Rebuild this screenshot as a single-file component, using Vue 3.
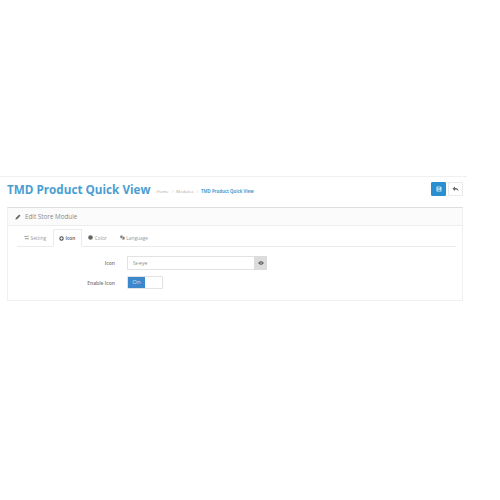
<template>
    <div class="page">
        <div class="content">
            <div class="page-header">
                <h1 class="title">TMD Product Quick View</h1>
                <ul class="crumbs">
                    <li>Home</li>
                    <li class="sep">/</li>
                    <li>Modules</li>
                    <li class="sep">/</li>
                    <li class="current">TMD Product Quick View</li>
                </ul>
                <div class="actions">
                    <button class="btn btn-save">
                        <svg width="6" height="6" viewBox="0 0 12 12">
                            <path fill="#cfe6f5" d="M1 1h8l2 2v8H1z"/>
                            <path fill="#5aa9dc" d="M3 2h5v3H3zM3 7h6v3H3z"/>
                        </svg>
                    </button>
                    <button class="btn btn-back">
                        <svg width="7" height="6" viewBox="0 0 14 12">
                            <path fill="#666" d="M6 1v3c4 0 7 1 7 7-1-3-3-4-7-4v3L1 5.500z"/>
                        </svg>
                    </button>
                </div>
            </div>
            <div class="panel">
                <div class="panel-heading">
                    <svg width="6" height="6" viewBox="0 0 12 12">
                        <path fill="#666" d="M8.500 1l2.500 2.500-7 7L1 11l.5-3z"/>
                    </svg>
                    <span>Edit Store Module</span>
                </div>
                <div class="panel-body">
                    <div class="tabs">
                        <div v-for="tab in tabs" :key="tab.name" class="tab" :class="{ active: tab.name == 'Icon' }">
                            <svg width="5" height="5" viewBox="0 0 12 12">
                                <path v-if="tab.icon == 'cog'" fill="#888" d="M1 3h6v2H1zM8 2h3v2H8zM3 7h3v3H3zM7 8h4v2H7z"/>
                                <circle v-else-if="tab.icon == 'ring'" cx="6" cy="6" r="4" fill="none" stroke="#444" stroke-width="2.500"/>
                                <circle v-else-if="tab.icon == 'dot'" cx="6" cy="6" r="5.500" fill="#666"/>
                                <path v-else fill="#777" d="M1 1h5v7H1zM7 4h4v7H5V9h2z"/>
                            </svg>
                            <span>{{ tab.name }}</span>
                        </div>
                    </div>
                    <div class="form-row">
                        <label>Icon</label>
                        <div class="input-group">
                            <div class="input">fa-eye</div>
                            <div class="addon">
                                <svg width="6" height="4" viewBox="0 0 14 10">
                                    <path fill="#666" d="M0 5c3-6 11-6 14 0-3 6-11 6-14 0z"/>
                                    <circle cx="7" cy="5" r="2" fill="#ccc"/>
                                </svg>
                            </div>
                        </div>
                    </div>
                    <div class="form-row">
                        <label>Enable Icon</label>
                        <div class="switch">
                            <div class="switch-on">On</div>
                            <div class="switch-off"></div>
                        </div>
                    </div>
                </div>
            </div>
        </div>
    </div>
</template>
<script setup>
const tabs = [
    { name: "Setting", icon: "cog" },
    { name: "Icon", icon: "ring" },
    { name: "Color", icon: "dot" },
    { name: "Language", icon: "lang" },
];
</script>
<style>
html, body {
    background: #fff;
}
</style>
<style scoped>
.page {
    width: 500px;
    height: 500px;
    padding-top: 176px;
    box-sizing: border-box;
    font-family: "Open Sans", sans-serif;
    color: #666;
    overflow: hidden;
}
.content {
    width: 467px;
    border-top: 1px solid #f0f0f0;
    padding: 0 4px 0 7px;
    box-sizing: border-box;
}
.page-header {
    display: flex;
    align-items: center;
    height: 24px;
    margin-bottom: 6px;
}
.title {
    margin: 0;
    font-size: 11.700px;
    font-weight: 700;
    color: #4a9ed2;
    white-space: nowrap;
    line-height: 24px;
}
.crumbs {
    display: flex;
    align-items: center;
    gap: 2px;
    list-style: none;
    margin: 3px 0 0 6px;
    padding: 0;
    font-size: 4.300px;
    color: #aaa;
}
.sep {
    margin: 0 1px;
    color: #ccc;
}
.current {
    color: #4a9ed2;
    font-weight: 700;
}
.actions {
    display: flex;
    gap: 2px;
    margin-left: auto;
}
.btn {
    display: flex;
    align-items: center;
    justify-content: center;
    width: 15px;
    height: 14px;
    padding: 0;
    border-radius: 1px;
    box-sizing: border-box;
}
.btn-save {
    background: #2a8fcf;
    border: 1px solid #2a8fcf;
}
.btn-back {
    background: #fff;
    border: 1px solid #eaeaea;
}
.panel {
    border: 1px solid #f0f0f0;
    border-top: 1px solid #ddd;
    height: 94px;
    box-sizing: border-box;
}
.panel-heading {
    display: flex;
    align-items: center;
    gap: 4px;
    height: 18px;
    padding-left: 7px;
    background: #fbfbfb;
    border-bottom: 1px solid #eee;
    font-size: 6.300px;
    color: #888;
    box-sizing: border-box;
}
.panel-body {
    padding: 3px 6px 0 9px;
}
.tabs {
    display: flex;
    height: 18px;
    padding-left: 0.500px;
    border-bottom: 1px solid #ebebeb;
    box-sizing: border-box;
}
.tab {
    display: flex;
    align-items: center;
    gap: 1.500px;
    padding: 0 6.500px;
    font-size: 4.800px;
    color: #999;
}
.tab.active {
    border: 1px solid #ebebeb;
    border-bottom: 1px solid #fff;
    border-radius: 1px 1px 0 0;
    height: 18px;
    padding: 0 5.500px;
    color: #555;
    font-weight: 600;
    box-sizing: border-box;
}
.form-row {
    display: flex;
    align-items: center;
    margin-top: 9px;
}
.form-row + .form-row {
    margin-top: 6px;
}
label {
    width: 98px;
    text-align: right;
    font-size: 5px;
    font-weight: 600;
    color: #777;
}
.input-group {
    display: flex;
    margin-left: 12px;
    height: 14px;
}
.input {
    width: 127px;
    border: 1px solid #e2e2e2;
    border-right: 0;
    border-radius: 1px 0 0 1px;
    padding-left: 5px;
    font-size: 5px;
    line-height: 12px;
    color: #888;
    box-sizing: border-box;
}
.addon {
    display: flex;
    align-items: center;
    justify-content: center;
    width: 13px;
    background: #dcdcdc;
}
.switch {
    display: flex;
    margin-left: 12px;
    width: 36px;
    height: 13px;
    border: 1px solid #e2e2e2;
    border-radius: 1px;
    box-sizing: border-box;
}
.switch-on {
    width: 17px;
    background: #3d88cc;
    color: #cfe2f3;
    font-size: 6px;
    line-height: 11px;
    text-align: center;
}
.switch-off {
    flex: 1;
    background: #fff;
}
</style>
